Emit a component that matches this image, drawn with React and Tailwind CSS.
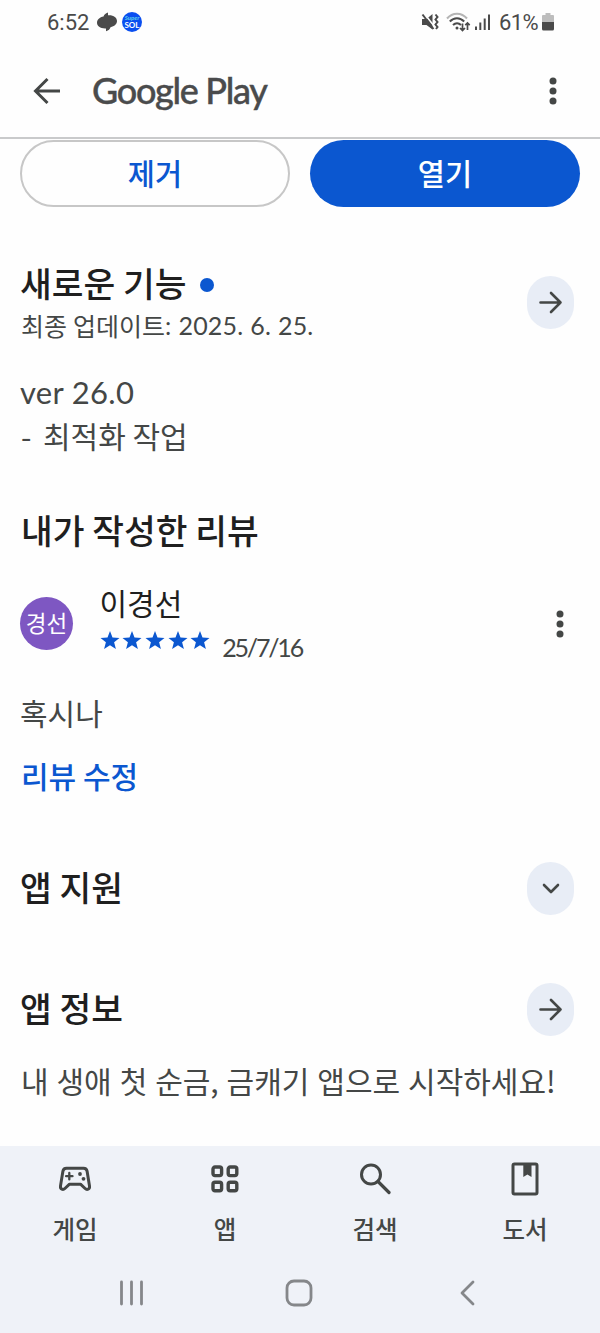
import React from "react";

const tabs = [
  {
    label: "게임",
    icon: (
      <svg width="34" height="26" viewBox="0 0 34 26" fill="none" stroke="currentColor" strokeWidth="3" strokeLinejoin="round" strokeLinecap="round">
        <path d="M8.500 2.300h17c2 0 3.300 1.200 3.600 3l2.400 14.600c.5 3.500-2.600 4.300-4.400 2.600l-4.600-4.300h-11l-4.600 4.300c-1.800 1.700-4.900.9-4.400-2.600L4.900 5.300c.3-1.800 1.600-3 3.600-3z" />
        <path d="M11.300 7v6.400M8.100 10.200h6.400" strokeWidth="2.300" />
        <circle cx="22" cy="8" r="1.900" fill="currentColor" stroke="none" />
        <circle cx="25.500" cy="12.800" r="1.900" fill="currentColor" stroke="none" />
      </svg>
    ),
  },
  {
    label: "앱",
    icon: (
      <svg width="28" height="28" viewBox="0 0 28 28" fill="none" stroke="currentColor" strokeWidth="3.400">
        <rect x="2" y="2" width="8.600" height="8.600" rx="2" />
        <rect x="17.200" y="2" width="8.600" height="8.600" rx="2" />
        <rect x="2" y="17.200" width="8.600" height="8.600" rx="2" />
        <rect x="17.200" y="17.200" width="8.600" height="8.600" rx="2" />
      </svg>
    ),
  },
  {
    label: "검색",
    icon: (
      <svg width="32" height="32" viewBox="0 0 32 32" fill="none" stroke="currentColor" strokeWidth="3" strokeLinecap="round">
        <circle cx="12" cy="11.500" r="9.500" />
        <path d="M19 18.500l11 11" strokeWidth="3.200" />
      </svg>
    ),
  },
  {
    label: "도서",
    icon: (
      <svg width="28" height="34" viewBox="0 0 28 34" fill="none" stroke="currentColor" strokeWidth="3">
        <rect x="2" y="2" width="24" height="30" rx="1.500" />
        <path d="M12.300 2h8.200v13l-4.100-2.500-4.100 2.500z" fill="currentColor" stroke="none" />
      </svg>
    ),
  },
];

const Dots = () => (
  <svg width="8" height="28" viewBox="0 0 8 28" fill="#444746">
    <circle cx="4" cy="4" r="3.500" />
    <circle cx="4" cy="14" r="3.500" />
    <circle cx="4" cy="24" r="3.500" />
  </svg>
);

const RoundButton = ({ children }) => (
  <button className="flex h-[53px] w-[47px] shrink-0 items-center justify-center rounded-full bg-[#e8edf6] text-[#444746]">
    {children}
  </button>
);

const ArrowRight = () => (
  <svg width="24" height="24" viewBox="0 0 24 24" fill="none" stroke="currentColor" strokeWidth="2.600" strokeLinecap="round" strokeLinejoin="round">
    <path d="M1.500 11.500h20M12 2l9.500 9.500L12 21" />
  </svg>
);

const Star = () => (
  <svg width="20" height="18" viewBox="0 0 20 18" fill="#0b57d0">
    <path d="M10 0l2.500 6.400 7 .5-5.400 4.400 1.800 6.700L10 14.300 4.100 18l1.800-6.700L.5 6.900l7-.5z" />
  </svg>
);

const StatusBar = () => (
  <div className="flex h-[44px] items-center justify-between pl-[47px] pr-[46px] text-[#4a4a4a]">
    <div className="flex items-center">
      <span className="mt-px w-[43px] whitespace-nowrap font-[Roboto] text-[22px]">6:52</span>
      <svg className="ml-[6px]" width="22" height="20" viewBox="0 0 22 20" fill="currentColor">
        <path d="M12 .5v2.700C17.500 2.800 21 5.500 21 9c0 3-2.700 5.500-6.500 6.200-.5 1.800-1.900 3.200-4.500 4v-2.700C4.500 16.800 1 14.300 1 10.800 1 7.700 3.700 5.200 7.500 4.600 8 2.800 9.400 1.300 12 .5z" />
      </svg>
      <div className="ml-[4px] flex size-[20px] flex-col items-center justify-center rounded-full bg-[#0a4ff0] font-[Lato]">
        <span className="text-[6px] font-bold italic leading-[6px] text-[#5fd0e8]">Super</span>
        <span className="text-[8px] font-bold leading-[8px] text-white">SOL</span>
      </div>
    </div>
    <div className="flex items-center">
      <svg width="18" height="18" viewBox="0 0 18 18" fill="currentColor">
        <path d="M1 6h4.500L11.500 1v15.500L5.500 12H1z" />
        <path d="M4 1.500l9 11.500" stroke="#fff" strokeWidth="1.600" />
        <path d="M1.500 1.500l11 14.500" stroke="currentColor" strokeWidth="2" />
        <path d="M14.500 1.500l2 2.500-2 2.500 2 2.500-2 2.500 2 2.500-1.500 2" fill="none" stroke="currentColor" strokeWidth="2" />
      </svg>
      <svg className="ml-[7px]" width="25" height="20" viewBox="0 0 25 20" fill="none" strokeWidth="2">
        <path d="M1 6.500c5.500-6.500 14.500-6.500 20 0" stroke="#b5b5b5" />
        <path d="M3.800 9.500c4.300-4.500 10-4.500 14.400 0M7 13c2.500-2.500 5.600-2.500 8 0" stroke="currentColor" />
        <circle cx="11" cy="16" r="1.500" fill="currentColor" />
        <path d="M16.500 11.500v7M14 16l2.500 2.500L19 16M21.500 18v-7M19.300 13.200l2.200-2.200 2.200 2.200" stroke="currentColor" strokeWidth="1.700" />
      </svg>
      <svg className="ml-[4px]" width="16" height="18" viewBox="0 0 16 18" fill="currentColor">
        <rect x="0" y="13.500" width="2" height="3.500" />
        <rect x="4.300" y="9.500" width="2" height="7.500" />
        <rect x="8.700" y="5.500" width="2" height="11.500" />
        <rect x="13" y="1.500" width="2" height="15.500" />
      </svg>
      <span className="ml-[8px] mt-px w-[40px] whitespace-nowrap font-[Roboto] text-[22px] tracking-[-0.600px]">61%</span>
      <svg className="ml-[3px]" width="12" height="18" viewBox="0 0 12 18">
        <path d="M3.500 0h5v2H11a1 1 0 011 1v7H0V3a1 1 0 011-1h2.500z" fill="#bdbdbd" />
        <path d="M0 9h12v7a1.500 1.500 0 01-1.500 1.500h-9A1.500 1.500 0 010 16z" fill="#4a4a4a" />
      </svg>
    </div>
  </div>
);

const App = () => {
  return (
    <div className="flex h-[1333px] w-[600px] flex-col overflow-hidden bg-[#fefefe] font-['Noto_Sans_CJK_KR',sans-serif] text-[#1f1f1f]">
      <StatusBar />

      {/* Header */}
      <header className="flex h-[95px] shrink-0 items-center border-b-2 border-[#c9cacb] pl-[33px] pr-[43px]">
        <svg width="28" height="28" viewBox="0 0 28 28" fill="none" stroke="#444746" strokeWidth="3">
          <path d="M27 14H3M14.500 2L2.500 14l12 12" />
        </svg>
        <h1 className="-mt-[2px] ml-[31px] flex-1 whitespace-nowrap font-[Lato] text-[36px] font-medium leading-[40px] tracking-[-1.300px] text-[#4a4b4c] [-webkit-text-stroke:0.400px_#4a4b4c]">
          Google Play
        </h1>
        <Dots />
      </header>

      <main className="flex flex-1 flex-col px-5 pt-[1px]">
        {/* Action buttons */}
        <div className="grid grid-cols-2 gap-5 text-[29.500px] font-medium">
          <button className="flex h-[67px] items-center justify-center rounded-full border-2 border-[#c7c7c7] pb-[2px] text-[#0b57d0]">
            제거
          </button>
          <button className="flex h-[67px] items-center justify-center rounded-full bg-[#0b57d0] pb-[2px] text-white">
            열기
          </button>
        </div>

        {/* What's new */}
        <section className="mt-[54px]">
          <div className="flex items-center justify-between pr-[6px]">
            <div>
              <h2 className="flex h-[43px] items-center text-[34.500px] font-medium">
                새로운 기능
                <span className="ml-[14px] mt-[4px] size-[14px] rounded-full bg-[#0b57d0]" />
              </h2>
              <p className="flex h-[40px] items-center whitespace-pre pl-px pt-[3px] text-[25px] text-[#444746] [word-spacing:0.500px]">
                최종 업데이트<span className="font-[Lato] tracking-[0.150px]">: 2025. 6. 25.</span>
              </p>
            </div>
            <RoundButton>
              <ArrowRight />
            </RoundButton>
          </div>
          <div className="mt-[26px] text-[30px] leading-[45px] text-[#444746]">
            <p className="font-[Lato] text-[31px] tracking-[0.300px]">ver 26.0</p>
            <p className="-mt-[2px] flex">
              <span className="w-[23px] pl-px">-</span>최적화 작업
            </p>
          </div>
        </section>

        {/* My review */}
        <section className="mt-[50px]">
          <h2 className="flex h-[43px] items-center pl-px text-[34.500px] font-medium">내가 작성한 리뷰</h2>
          <div className="mt-[33px] flex h-[80px] items-center">
            <div className="-mt-px flex size-[53px] items-center justify-center rounded-full bg-[#7e57c2] pb-px text-[22.500px] text-white">
              경선
            </div>
            <div className="ml-[26.500px] flex-1">
              <p className="h-[42px] text-[30px] leading-[37px]">이경선</p>
              <div className="flex h-[38px]">
                <div className="flex gap-[2.700px] pt-[5px]">
                  {[1, 2, 3, 4, 5].map((n) => (
                    <Star key={n} />
                  ))}
                </div>
                <span className="ml-[12px] mt-[6px] font-[Lato] text-[25px] leading-[30px] tracking-[-2.200px] text-[#444746]">25/7/16</span>
              </div>
            </div>
            <button className="mr-[16px]">
              <Dots />
            </button>
          </div>
          <p className="mt-[26px] text-[30px] leading-[45px] text-[#444746]">혹시나</p>
          <button className="mt-[18px] block pl-px text-[30px] font-medium leading-[45px] text-[#0b57d0]">리뷰 수정</button>
        </section>

        {/* App support */}
        <section className="mt-[64px] flex items-center justify-between pr-[6px]">
          <h2 className="-mt-[6px] text-[34.500px] font-medium leading-[50px]">앱 지원</h2>
          <RoundButton>
            <svg width="18" height="12" viewBox="0 0 18 12" fill="none" stroke="currentColor" strokeWidth="2.600" strokeLinecap="round" strokeLinejoin="round">
              <path d="M2 2l7 7 7-7" />
            </svg>
          </RoundButton>
        </section>

        {/* About */}
        <section className="mt-[68px]">
          <div className="flex items-center justify-between pr-[6px]">
            <h2 className="-mt-[6px] text-[34.500px] font-medium leading-[50px]">앱 정보</h2>
            <RoundButton>
              <ArrowRight />
            </RoundButton>
          </div>
          <p className="mt-[22px] whitespace-nowrap pl-px text-[30px] leading-[45px] text-[#444746] [word-spacing:1.200px]">
            내 생애 첫 순금, 금캐기 앱으로 시작하세요!
          </p>
        </section>
      </main>

      {/* Bottom tabs */}
      <nav className="flex h-[107px] shrink-0 bg-[#eff2f8] text-[#444746]">
        {tabs.map((tab) => (
          <div key={tab.label} className="flex flex-1 flex-col items-center pt-[13px]">
            <div className="flex h-[40px] items-center">{tab.icon}</div>
            <span className="mt-[12px] text-[24.500px] font-medium leading-[36px]">{tab.label}</span>
          </div>
        ))}
      </nav>

      {/* System navigation */}
      <div className="flex h-[80px] shrink-0 items-center bg-[#eff2f8] pl-[119px] text-[#85878a]">
        <svg width="26" height="26" viewBox="0 0 26 26" fill="none" stroke="currentColor" strokeWidth="2.800" strokeLinecap="round">
          <path d="M2.500 2v22M12.500 2v22M22.500 2v22" />
        </svg>
        <svg className="ml-[140px]" width="28" height="28" viewBox="0 0 28 28" fill="none" stroke="currentColor" strokeWidth="2.800">
          <rect x="2" y="2" width="24" height="24" rx="7" />
        </svg>
        <svg className="ml-[146px]" width="17" height="26" viewBox="0 0 17 26" fill="none" stroke="currentColor" strokeWidth="2.800" strokeLinejoin="round" strokeLinecap="round">
          <path d="M14 2L3 13l11 11" />
        </svg>
      </div>
    </div>
  );
};

export default App;
